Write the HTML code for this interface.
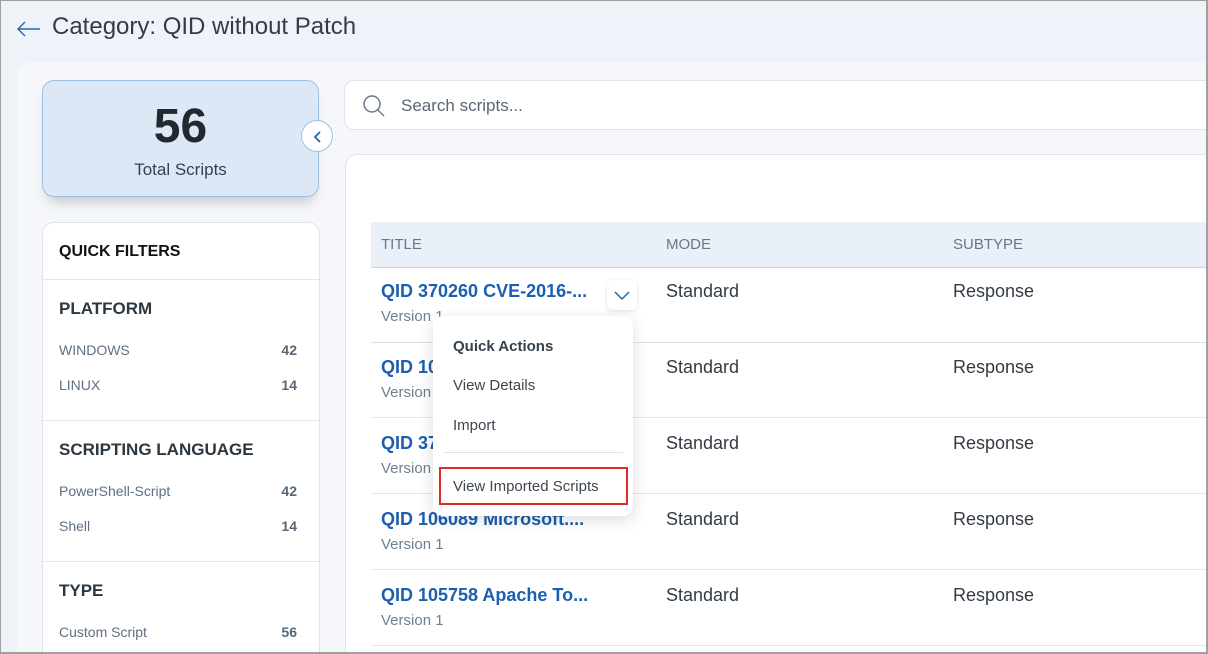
<!DOCTYPE html>
<html style="width:1208px;height:654px;overflow:hidden"><head><meta charset="utf-8"><style>
*{box-sizing:border-box;margin:0;padding:0}
body{width:1208px;height:654px;overflow:hidden;font-family:"Liberation Sans",sans-serif;background:#eef3fa;position:relative}
.a{position:absolute}
.frame{position:absolute;left:0;top:0;width:1208px;height:654px;border:2px solid #a0a0a0;border-top-width:1px;border-left-width:1px;pointer-events:none;z-index:50}
.fl{position:absolute;left:58px;font-size:14px;color:#5f6f82}
.fn{position:absolute;right:22px;font-size:14px;font-weight:bold;color:#56677a}
.fh{position:absolute;left:16px;font-size:17px;font-weight:bold;color:#2d3740}
.hr{position:absolute;left:0;right:0;height:1px;background:#e1e6ec}
.t{position:absolute;left:381px;font-size:18px;font-weight:bold;color:#1a5fb0}
.v{position:absolute;left:381px;font-size:15px;color:#6e7f90}
.c{position:absolute;font-size:18px;color:#333b44}
.rl{position:absolute;left:371px;right:0;height:1px;background:#e3e7ec}
</style></head><body>
<svg class="a" style="left:16px;top:20px" width="26" height="18" viewBox="0 0 26 18"><path d="M24 9H2M9 2L2 9l7 7" fill="none" stroke="#2666b0" stroke-width="1.4"/></svg>
<div class="a" style="left:52px;top:13px;font-size:24px;color:#353b42">Category: QID without Patch</div>
<div class="a" style="left:17px;top:62px;width:1191px;height:592px;background:#f5f7fa;border-radius:14px 0 0 0"></div>
<div class="a" style="left:42px;top:80px;width:277px;height:117px;background:#dce8f5;border:1px solid #9ec0e3;border-radius:12px;box-shadow:0 10px 14px -6px rgba(0,0,0,.22)">
<div class="a" style="left:0;right:0;top:18px;text-align:center;font-size:48px;font-weight:bold;color:#22282e">56</div>
<div class="a" style="left:0;right:0;top:79px;text-align:center;font-size:17px;color:#38424c">Total Scripts</div></div>
<div class="a" style="left:301px;top:120px;width:32px;height:32px;border-radius:50%;background:#fff;border:1px solid #9ec0e3"><svg class="a" style="left:10px;top:9px" width="12" height="14"><path d="M8 2L3 7l5 5" fill="none" stroke="#2666b0" stroke-width="1.8"/></svg></div>
<div class="a" style="left:42px;top:222px;width:278px;height:432px;background:#fff;border:1px solid #e0e5eb;border-bottom:none;border-radius:12px 12px 0 0">
<div class="fh" style="top:20px;font-size:16px;color:#111">QUICK FILTERS</div>
<div class="hr" style="top:56px"></div>
<div class="fh" style="top:76px">PLATFORM</div>
<div class="fl" style="left:16px;top:119px">WINDOWS</div><div class="fn" style="top:119px">42</div>
<div class="fl" style="left:16px;top:154px">LINUX</div><div class="fn" style="top:154px">14</div>
<div class="hr" style="top:197px"></div>
<div class="fh" style="top:217px">SCRIPTING LANGUAGE</div>
<div class="fl" style="left:16px;top:260px">PowerShell-Script</div><div class="fn" style="top:260px">42</div>
<div class="fl" style="left:16px;top:295px">Shell</div><div class="fn" style="top:295px">14</div>
<div class="hr" style="top:338px"></div>
<div class="fh" style="top:358px">TYPE</div>
<div class="fl" style="left:16px;top:401px">Custom Script</div><div class="fn" style="top:401px">56</div>
</div>
<div class="a" style="left:344px;top:80px;width:864px;height:50px;background:#fff;border:1px solid #e0e5eb;border-right:none;border-radius:10px 0 0 10px">
<svg class="a" style="left:16px;top:13px" width="26" height="26"><circle cx="11" cy="10" r="8" fill="none" stroke="#6b7a8a" stroke-width="1.5"/><path d="M17 16l6 6" stroke="#6b7a8a" stroke-width="1.5"/></svg>
<div class="a" style="left:56px;top:15px;font-size:17px;color:#5a6672">Search scripts...</div></div>
<div class="a" style="left:345px;top:154px;width:863px;height:500px;background:#fff;border:1px solid #e0e5eb;border-right:none;border-bottom:none;border-radius:12px 0 0 0"></div>
<div class="a" style="left:371px;top:222px;width:837px;height:46px;background:#e9f0f8;border-bottom:1px solid #c6d6e8"></div>
<div class="a" style="left:381px;top:236px;font-size:15px;color:#67778a">TITLE</div>
<div class="a" style="left:666px;top:236px;font-size:15px;color:#67778a">MODE</div>
<div class="a" style="left:953px;top:236px;font-size:15px;color:#67778a">SUBTYPE</div>
<div class="t" style="top:281px">QID 370260 CVE-2016-...</div><div class="v" style="top:308px">Version 1</div>
<div class="c" style="left:666px;top:281px">Standard</div><div class="c" style="left:953px;top:281px">Response</div>
<div class="rl" style="top:342px;background:#d6e2ef"></div>
<div class="t" style="top:357px">QID 10</div><div class="v" style="top:384px">Version</div>
<div class="c" style="left:666px;top:357px">Standard</div><div class="c" style="left:953px;top:357px">Response</div>
<div class="rl" style="top:417px"></div>
<div class="t" style="top:433px">QID 37</div><div class="v" style="top:460px">Version</div>
<div class="c" style="left:666px;top:433px">Standard</div><div class="c" style="left:953px;top:433px">Response</div>
<div class="rl" style="top:493px"></div>
<div class="t" style="top:509px">QID 106089 Microsoft....</div><div class="v" style="top:536px">Version 1</div>
<div class="c" style="left:666px;top:509px">Standard</div><div class="c" style="left:953px;top:509px">Response</div>
<div class="rl" style="top:569px"></div>
<div class="t" style="top:585px">QID 105758 Apache To...</div><div class="v" style="top:612px">Version 1</div>
<div class="c" style="left:666px;top:585px">Standard</div><div class="c" style="left:953px;top:585px">Response</div>
<div class="rl" style="top:645px"></div>
<div class="a" style="left:607px;top:280px;width:30px;height:30px;background:#fff;border-radius:5px;box-shadow:0 1px 4px rgba(0,0,0,.12)"><svg class="a" style="left:6px;top:9px" width="18" height="12"><path d="M2 3l7 7 7-7" fill="none" stroke="#2666b0" stroke-width="1.5"/></svg></div>
<div class="a" style="left:433px;top:316px;width:200px;height:200px;background:#fff;border-radius:10px;box-shadow:0 4px 16px rgba(0,0,0,.14);z-index:5">
<div class="a" style="left:20px;top:22px;font-size:15px;font-weight:bold;color:#37414b">Quick Actions</div>
<div class="a" style="left:20px;top:61px;font-size:15px;color:#3d4650">View Details</div>
<div class="a" style="left:20px;top:101px;font-size:15px;color:#3d4650">Import</div>
<div class="a" style="left:10px;top:136px;width:180px;height:1px;background:#dfe3e8"></div>
<div class="a" style="left:6px;top:151px;width:189px;height:38px;border:2px solid #e02a2a"></div>
<div class="a" style="left:20px;top:162px;font-size:15px;color:#3d4650">View Imported Scripts</div>
</div>
<div class="frame"></div>
</body></html>
